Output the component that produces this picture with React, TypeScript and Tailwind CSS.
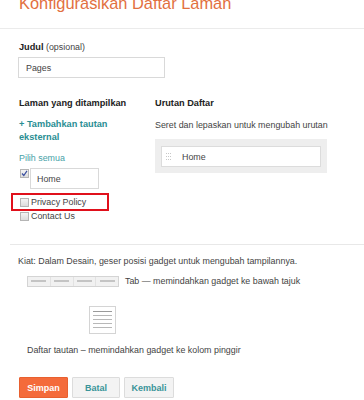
import React from "react";

const Check = ({ checked }: { checked?: boolean }) => (
  <div className="w-[9px] h-[9px] border border-[#b5b5b5] bg-gradient-to-b from-[#f4f4f4] to-[#dcdcdc] flex items-center justify-center shrink-0">
    {checked && (
      <svg width="7" height="7" viewBox="0 0 7 7">
        <path d="M1 3.5 L2.8 5.5 L6 0.8" stroke="#3a4fa0" strokeWidth="1.2" fill="none" />
      </svg>
    )}
  </div>
);

const Grip = () => (
  <svg width="6" height="9" viewBox="0 0 6 9" className="shrink-0">
    {[0, 1, 2].map((r) =>
      [0, 1, 2].map((c) => (
        <rect key={`${r}-${c}`} x={c * 2} y={r * 3 + 1} width="1" height="1" fill="#c8c8c8" />
      ))
    )}
  </svg>
);

export default function App() {
  return (
    <div className="w-[364px] h-[400px] overflow-hidden bg-white font-['Liberation_Sans',Arial,sans-serif] text-[8.9px] leading-[12px] text-[#333]">
      <div className="flex flex-col h-[29px] border-b border-[#ebebeb] pl-[19px]">
        <h1 className="-mt-[7px] text-[16.4px] leading-[20px] text-[#e2703f] whitespace-nowrap">Konfigurasikan Daftar Laman</h1>
      </div>
      <div className="pl-[19px] pt-[12px]">
        <div className="text-[#222]">
          <span className="font-bold text-[9.2px]">Judul</span> <span className="text-[#444]">(opsional)</span>
        </div>
        <div className="mt-[4px] -ml-px w-[147px] h-[21px] border border-[#d9d9d9] pl-[7px] flex items-center text-[#444]">Pages</div>

        <div className="flex mt-[19px]">
          <div className="w-[136px] flex flex-col">
            <div className="font-bold text-[9.2px] text-[#222]">Laman yang ditampilkan</div>
            <div className="mt-[9px] font-bold text-[9.2px] text-[#2a8e93] leading-[13px]">
              + Tambahkan tautan<br />eksternal
            </div>
            <div className="mt-[8px] text-[#47a2a7]">Pilih semua</div>
            <div className="mt-[4px] flex items-start">
              <div className="mt-[1px] ml-[1px]"><Check checked /></div>
              <div className="ml-[1px] w-[69px] h-[21px] border border-[#d9d9d9] pl-[6px] flex items-center text-[#444]">Home</div>
            </div>
            <div className="mt-[4px] -ml-[8px] w-[98px] h-[18px] border-2 border-[#e0101b] flex items-center pl-[7px]">
              <Check />
              <span className="ml-[2px] text-[#444]">Privacy Policy</span>
            </div>
            <div className="-mt-px flex items-center ml-px">
              <Check />
              <span className="ml-[2px] text-[#444]">Contact Us</span>
            </div>
          </div>
          <div className="flex flex-col">
            <div className="font-bold text-[9.2px] text-[#222]">Urutan Daftar</div>
            <div className="mt-[10px] text-[#444] whitespace-nowrap">Seret dan lepaskan untuk mengubah urutan</div>
            <div className="mt-[8px] w-[172px] h-[34px] bg-[#eeeeee] px-[6px] pt-[7px] pb-[6px]">
              <div className="h-full bg-white border border-[#dcdcdc] flex items-center pl-[4px]">
                <Grip />
                <span className="ml-[10px] text-[#444]">Home</span>
              </div>
            </div>
          </div>
        </div>

        <div className="mt-[22px] -ml-[9px] border-t border-[#e8e8e8]" />

        <div className="mt-[10px] -ml-px text-[#444] whitespace-nowrap">Kiat: Dalam Desain, geser posisi gadget untuk mengubah tampilannya.</div>
        <div className="mt-[8px] ml-[8px] flex items-center">
          <div className="w-[92px] h-[11px] border border-[#d4d4d4] bg-[#f1f1f1] flex items-center">
            {[0, 1, 2, 3].map((i) => (
              <div key={i} className={`flex-1 h-full flex items-center justify-center ${i < 3 ? "border-r border-[#e2e2e2]" : ""}`}>
                <div className="w-[15px] h-[2px] bg-[#c4c4c4]" />
              </div>
            ))}
          </div>
          <span className="ml-[6px] text-[#444] whitespace-nowrap">Tab — memindahkan gadget ke bawah tajuk</span>
        </div>
        <div className="mt-[19px] ml-[70px] w-[27px] h-[28px] border border-[#d4d4d4] bg-white flex flex-col items-center pt-[4px] gap-[3px]">
          {[0, 1, 2, 3, 4].map((i) => (
            <div key={i} className={`w-[19px] h-px ${i === 0 ? "bg-[#9a9a9a]" : "bg-[#b8b8b8]"}`} />
          ))}
        </div>
        <div className="mt-[10px] ml-[8px] text-[#444] whitespace-nowrap">Daftar tautan – memindahkan gadget ke kolom pinggir</div>

        <div className="mt-[21px] flex gap-[4px] text-[9px] font-bold">
          <div className="w-[49px] h-[21px] bg-[#f46b3b] border border-[#e8602f] text-white flex items-center justify-center rounded-[1px]">Simpan</div>
          <div className="w-[48px] h-[21px] bg-[#f3f3f3] border border-[#dcdcdc] text-[#3a9499] flex items-center justify-center rounded-[1px]">Batal</div>
          <div className="w-[50px] h-[21px] bg-[#f3f3f3] border border-[#dcdcdc] text-[#3a9499] flex items-center justify-center rounded-[1px]">Kembali</div>
        </div>
      </div>
    </div>
  );
}
